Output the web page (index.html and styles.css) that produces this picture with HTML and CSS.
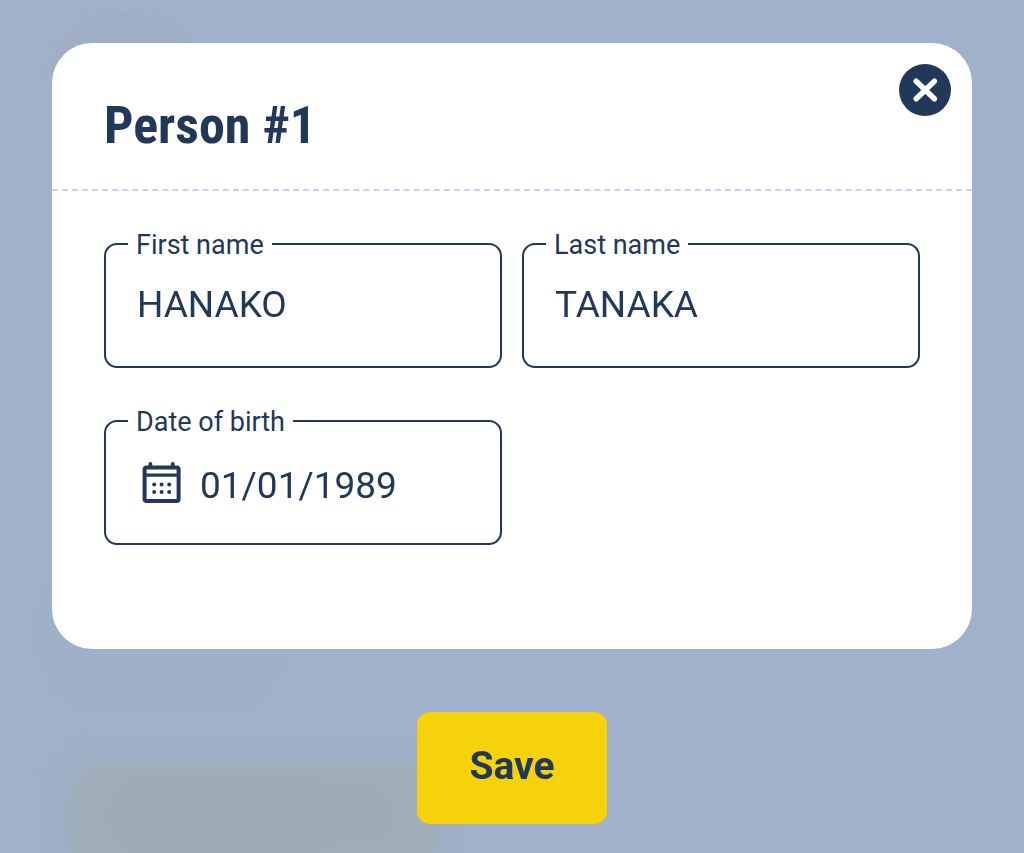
FILE: index.html
```html
<!DOCTYPE html>
<html lang="en">
<head>
  <meta charset="UTF-8">
  <meta name="viewport" content="width=device-width, initial-scale=1.0">
  <title>Person #1</title>
  <link rel="stylesheet" href="styles.css">
</head>
<body>

<!-- blurred page behind the dialog -->
<div class="backdrop" aria-hidden="true">
  <div class="blob blob-logo"></div>
  <div class="blob blob-text"></div>
  <div class="blob blob-shadow"></div>
  <div class="blob blob-button"></div>
  <div class="blob blob-button-text"></div>
  <div class="blob blob-button-icon"></div>
</div>

<form class="person-form">
  <section class="modal" role="dialog" aria-labelledby="modal-title">
    <header class="modal-header">
      <h1 class="modal-title" id="modal-title">Person #1</h1>
      <button type="button" class="close-button" aria-label="Close">
        <svg viewBox="0 0 52 52" width="52" height="52">
          <circle cx="26" cy="26" r="26" fill="#213858"/>
          <path d="M17.2 17.2L35.4 34.8M35.4 17.2L17.2 34.8" stroke="#fff" stroke-width="5.4" stroke-linecap="round"/>
        </svg>
      </button>
    </header>

    <div class="modal-body">
      <div class="field">
        <label class="field-label" for="first-name">First name</label>
        <input class="field-input" type="text" id="first-name" value="HANAKO">
      </div>
      <div class="field">
        <label class="field-label" for="last-name">Last name</label>
        <input class="field-input" type="text" id="last-name" value="TANAKA">
      </div>
      <div class="field field-date">
        <label class="field-label" for="birth-date">Date of birth</label>
        <svg class="calendar-icon" viewBox="0 0 40 42" width="40" height="42">
          <g fill="none" stroke="#213858">
            <rect x="2.6" y="5.6" width="34" height="33.4" rx="2" stroke-width="4"/>
            <path d="M3 13.2H37" stroke-width="3.2"/>
            <path d="M8.4 2V5M30.8 2V5" stroke-width="3.8" stroke-linecap="round"/>
          </g>
          <g fill="#213858">
            <circle cx="12.2" cy="22.6" r="2"/>
            <circle cx="19.6" cy="22.6" r="2"/>
            <circle cx="27.2" cy="22.6" r="2"/>
            <circle cx="12.2" cy="30" r="2"/>
            <circle cx="19.6" cy="30" r="2"/>
            <circle cx="27.2" cy="30" r="2"/>
          </g>
        </svg>
        <input class="field-input" type="text" id="birth-date" value="01/01/1989">
      </div>
    </div>
  </section>

  <button type="submit" class="save-button">Save</button>
</form>

</body>
</html>
```

FILE: styles.css
```css
* {
  box-sizing: border-box;
}

body {
  margin: 0;
  background-color: #a0b1cc;
  color: #213858;
  font-family: Roboto, "Liberation Sans", sans-serif;
}

/* Backdrop */
.backdrop {
  position: fixed;
  inset: 0;
  overflow: hidden;
}

.blob {
  position: absolute;
  filter: blur(2px);
}

.blob-logo {
  left: 50px;
  top: 12px;
  width: 144px;
  height: 130px;
  border-radius: 72px;
  background-color: #9faec4;
}

.blob-text {
  left: 42px;
  top: 560px;
  width: 240px;
  height: 148px;
  border-radius: 60px;
  background-color: #9fb0ca;
}

.blob-shadow {
  left: 38px;
  top: 735px;
  width: 428px;
  height: 180px;
  border-radius: 64px;
  background-color: #9fafc5;
}

.blob-button {
  left: 67px;
  top: 763px;
  width: 370px;
  height: 110px;
  border-radius: 36px;
  background-color: #a0aeba;
}

.blob-button-text {
  left: 105px;
  top: 774px;
  width: 240px;
  height: 82px;
  border-radius: 41px;
  background-color: #9facb5;
}

.blob-button-icon {
  left: 310px;
  top: 786px;
  width: 86px;
  height: 58px;
  border-radius: 29px;
  background-color: #9facb5;
}

/* Dialog */
.person-form {
  position: relative;
  display: flex;
  flex-direction: column;
  align-items: center;
  gap: 63px;
  padding: 43px 52px 28px;
}

.modal {
  width: 100%;
  background-color: #fff;
  border-radius: 40px;
}

.modal-header {
  position: relative;
  padding: 54px 52px 34px;
  border-bottom: 2px dashed #c3d3e9;
}

.modal-title {
  margin: 0;
  font-family: "Roboto Condensed", Roboto, sans-serif;
  font-size: 52px;
  line-height: 58px;
  font-weight: 700;
}

.close-button {
  position: absolute;
  top: 21px;
  right: 21px;
  padding: 0;
  border: none;
  border-radius: 50%;
  background: none;
  cursor: pointer;
}

.close-button svg {
  display: block;
}

.modal-body {
  display: grid;
  grid-template-columns: repeat(2, minmax(0, 1fr));
  gap: 52px 20px;
  padding: 52px 52px 104px;
}

/* Fields */
.field {
  position: relative;
  display: flex;
  align-items: flex-start;
  gap: 18px;
  height: 125px;
  padding: 35px 31px;
  border: 2px solid #213858;
  border-radius: 13px;
}

.field-label {
  position: absolute;
  top: -16px;
  left: 22px;
  padding: 0 8px;
  background-color: #fff;
  font-size: 27px;
  line-height: 32px;
}

.field-input {
  flex: 1;
  min-width: 0;
  height: 48px;
  padding: 0;
  border: none;
  background: none;
  outline: none;
  color: inherit;
  font-family: inherit;
  font-size: 37px;
}

.field-date {
  padding: 40px 36px 34px;
}

.field-date .field-input {
  height: 46px;
}

.calendar-icon {
  flex: none;
}

.save-button {
  padding: 30px 52px 34px;
  border: none;
  border-radius: 13px;
  background-color: #f6d20a;
  color: inherit;
  font-family: inherit;
  font-size: 39px;
  line-height: 48px;
  font-weight: 700;
  cursor: pointer;
}
```
